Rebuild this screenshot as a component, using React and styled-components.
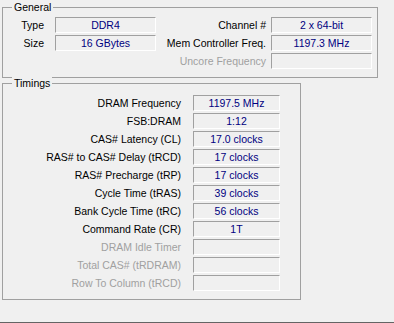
import React from 'react'
import styled, { createGlobalStyle } from 'styled-components'

// Memory tab data
const general = [
  { label: 'Type', value: 'DDR4', right: 'Channel #', rightValue: '2 x 64-bit' },
  { label: 'Size', value: '16 GBytes', right: 'Mem Controller Freq.', rightValue: '1197.3 MHz' },
  { label: '', value: null, right: 'Uncore Frequency', rightValue: '', disabled: true },
]

const timings = [
  { label: 'DRAM Frequency', value: '1197.5 MHz' },
  { label: 'FSB:DRAM', value: '1:12' },
  { label: 'CAS# Latency (CL)', value: '17.0 clocks' },
  { label: 'RAS# to CAS# Delay (tRCD)', value: '17 clocks' },
  { label: 'RAS# Precharge (tRP)', value: '17 clocks' },
  { label: 'Cycle Time (tRAS)', value: '39 clocks' },
  { label: 'Bank Cycle Time (tRC)', value: '56 clocks' },
  { label: 'Command Rate (CR)', value: '1T' },
  { label: 'DRAM Idle Timer', value: '', disabled: true },
  { label: 'Total CAS# (tRDRAM)', value: '', disabled: true },
  { label: 'Row To Column (tRCD)', value: '', disabled: true },
]

const GlobalStyle = createGlobalStyle`
  html, body {
    margin: 0;
    padding: 0;
    background: #f0f0f0;
  }
  body {
    font-family: "Liberation Sans", Arial, sans-serif;
    font-size: 10.5px;
    color: #000;
  }
`

const Window = styled.div`
  box-sizing: border-box;
  width: 394px;
  height: 323px;
  padding: 7px 0 0 2px;
  background: #f0f0f0;
  border-bottom: 1px solid #646464;
`

const Group = styled.div`
  position: relative;
  box-sizing: border-box;
  width: ${p => p.$width}px;
  margin-top: ${p => p.$gap || 0}px;
  padding: ${p => p.$pad};
  border: 1px solid #a0a0a0;
`

const Caption = styled.span`
  position: absolute;
  top: -7px;
  left: 9px;
  padding: 0 2px;
  line-height: 13px;
  background: #f0f0f0;
  color: #000;
`

const GeneralGrid = styled.div`
  display: grid;
  grid-template-columns: 52px 101px 115px 101px;
  grid-auto-rows: 16px;
  row-gap: 2px;
`

const TimingsGrid = styled.div`
  display: grid;
  grid-template-columns: 190px 87px;
  grid-auto-rows: 16px;
  row-gap: 2px;
`

const Label = styled.div`
  display: flex;
  align-items: center;
  justify-content: flex-end;
  padding-right: ${p => p.$space}px;
  white-space: nowrap;
  color: ${p => (p.$disabled ? '#a0a0a0' : '#000')};
`

const Field = styled.div`
  box-sizing: border-box;
  display: flex;
  align-items: center;
  justify-content: center;
  height: 16px;
  border-top: 1px solid #a0a0a0;
  border-left: 1px solid #a0a0a0;
  border-bottom: 1px solid #fff;
  border-right: 1px solid #fff;
  color: #000080;
  white-space: nowrap;
`

const Empty = styled.div``

export default function App() {
  return (
    <>
      <GlobalStyle />
      <Window>
        <Group $width={376} $pad="9px 0 8px 0">
          <Caption>General</Caption>
          <GeneralGrid>
            {general.map((row, i) => (
              <React.Fragment key={i}>
                <Label $space={11}>{row.label}</Label>
                {row.value === null ? <Empty /> : <Field>{row.value}</Field>}
                <Label $space={5} $disabled={row.disabled}>{row.right}</Label>
                <Field>{row.rightValue}</Field>
              </React.Fragment>
            ))}
          </GeneralGrid>
        </Group>
        <Group $width={299} $gap={5} $pad="11px 0 8px 0">
          <Caption>Timings</Caption>
          <TimingsGrid>
            {timings.map((row, i) => (
              <React.Fragment key={i}>
                <Label $space={12} $disabled={row.disabled}>{row.label}</Label>
                <Field>{row.value}</Field>
              </React.Fragment>
            ))}
          </TimingsGrid>
        </Group>
      </Window>
    </>
  )
}
